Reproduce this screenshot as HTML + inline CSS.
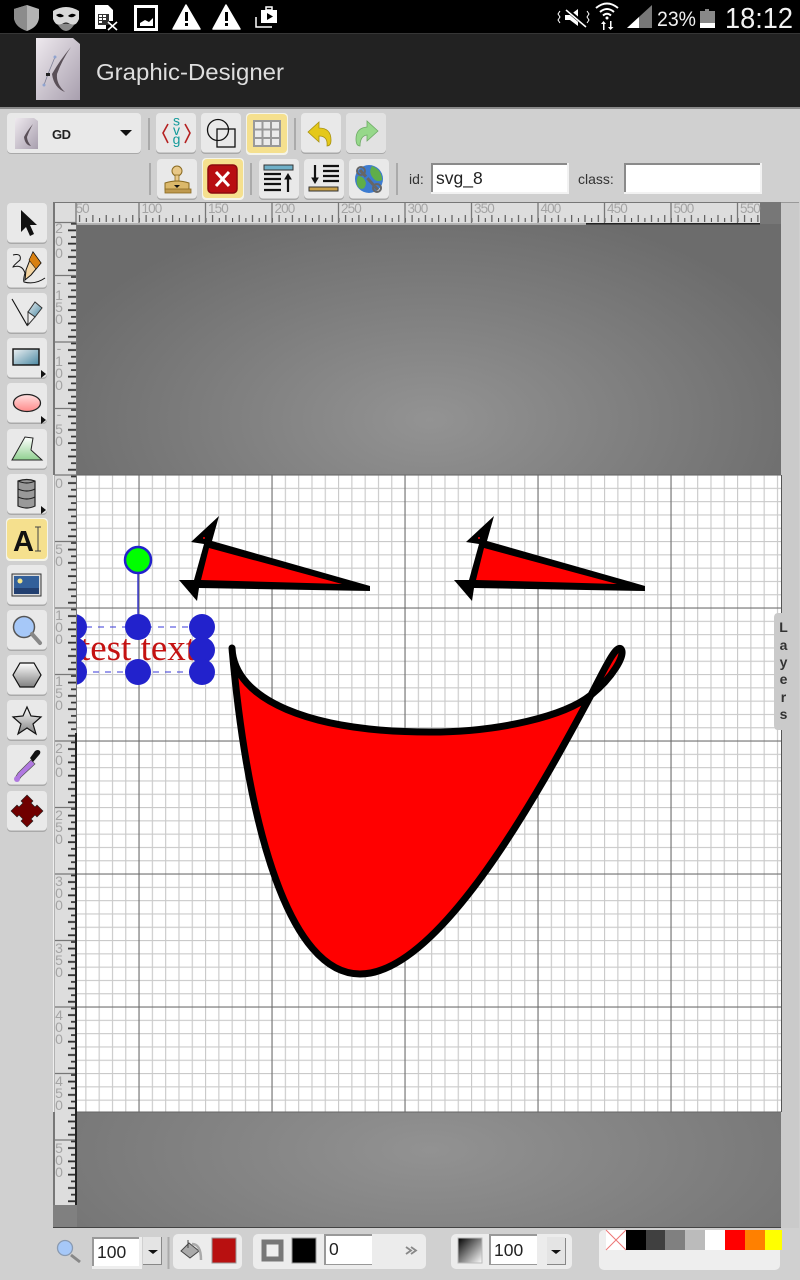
<!DOCTYPE html>
<html><head><meta charset="utf-8"><style>
html,body{margin:0;padding:0;background:#d0d0d0;width:800px;height:1280px;overflow:hidden}
svg{display:block}
text{font-family:"Liberation Sans",sans-serif}
.rt text{fill:#a4a4a4;font-size:13.5px;letter-spacing:-.9px}
.rl text{fill:#a4a4a4;font-size:14px}
</style></head><body>
<svg width="800" height="1280" viewBox="0 0 800 1280" xmlns="http://www.w3.org/2000/svg">
<defs>
<radialGradient id="gt" gradientUnits="userSpaceOnUse" cx="430" cy="420" r="400" gradientTransform="translate(430 420) scale(1 .55) translate(-430 -420)"><stop offset="0" stop-color="#939393"/><stop offset="1" stop-color="#6c6c6c"/></radialGradient>
<radialGradient id="gb" gradientUnits="userSpaceOnUse" cx="430" cy="1150" r="400" gradientTransform="translate(430 1150) scale(1 .4) translate(-430 -1150)"><stop offset="0" stop-color="#929292"/><stop offset="1" stop-color="#767676"/></radialGradient>
<linearGradient id="lg1" x1="0" y1="0" x2="1" y2="1"><stop offset="0" stop-color="#eef2f4"/><stop offset="1" stop-color="#4a88a2"/></linearGradient>
<linearGradient id="lg2" x1="0" y1="0" x2="0" y2="1"><stop offset="0" stop-color="#ffe0e0"/><stop offset="1" stop-color="#ff8a8a"/></linearGradient>
<linearGradient id="lg3" x1="0" y1="0" x2="0" y2="1"><stop offset="0" stop-color="#fff"/><stop offset="1" stop-color="#90d090"/></linearGradient>
<linearGradient id="lg4" x1="0" y1="0" x2="0" y2="1"><stop offset="0" stop-color="#fff"/><stop offset="1" stop-color="#808080"/></linearGradient>
<linearGradient id="lg5" x1="0" y1="0" x2="1" y2="1"><stop offset="0" stop-color="#000"/><stop offset="1" stop-color="#fff"/></linearGradient>
<linearGradient id="lg6" x1="0" y1="0" x2="1" y2="1"><stop offset="0" stop-color="#eee9ee"/><stop offset="1" stop-color="#a89fae"/></linearGradient>
<pattern id="minor" patternUnits="userSpaceOnUse" x="138.5" y="474.5" width="13.3" height="13.3"><path d="M.5 0V13.3M0 .5H13.3" stroke="#cacaca" stroke-width="1.3" fill="none"/></pattern>
<pattern id="tickT" patternUnits="userSpaceOnUse" x="72.5" y="212" width="13.3" height="10"><path d="M.5 6V10M7.1 3V10" stroke="#444" stroke-width="1" fill="none"/></pattern>
<pattern id="tickL" patternUnits="userSpaceOnUse" x="66" y="475" width="10" height="13.3"><path d="M5 1.5H10M2 8.1H10" stroke="#333" stroke-width="1.8" fill="none"/></pattern>
<clipPath id="cv"><rect x="77" y="224" width="704" height="1003"/></clipPath>
<g id="btn"><rect x="0" y="1" width="40" height="40" rx="4" fill="#a9a9a9"/><rect x="0" y="0" width="40" height="39.5" rx="4" fill="#e9e9e9"/></g>
<g id="tri"><path d="M0 0L5 4L0 8Z" fill="#111"/></g>
</defs>

<!-- status bar -->
<rect width="800" height="33" fill="#000"/>
<rect y="33" width="800" height="74" fill="#222"/>
<rect y="33" width="800" height="1" fill="#363636"/>
<rect y="107" width="800" height="2" fill="#8a8a8a"/>
<path d="M27 5L39 9V18Q38 27 27 31Q15 27 14 18V9Z" fill="#b4b4b4"/><path d="M27 5L14 9V18Q15 27 27 31Z" fill="#8c8c8c"/>
<path d="M53 11Q66 3 79 11V19Q76 27 70 24Q66 21 62 24Q56 27 53 19Z" fill="#d8d8d8"/><path d="M56 15Q60 12 64 16Q60 19 56 15ZM68 16Q72 12 76 15Q72 19 68 16Z" fill="#000"/><path d="M58 25Q66 22 74 25Q70 31 66 31Q62 31 58 25Z" fill="#888"/>
<path d="M95 5H108L113 10V21H106V29H95Z" fill="#fff"/><path d="M98 14H109V25H98Z" fill="#333"/><path d="M99 15h3v2h-3zM103 15h3v2h-3zM99 18h3v2h-3zM103 18h3v2h-3zM99 21h3v2h-3z" fill="#fff"/><path d="M108 22L117 30M117 22L108 30" stroke="#fff" stroke-width="1.6"/>
<rect x="135.500" y="6.500" width="21" height="23" fill="none" stroke="#fff" stroke-width="3"/><path d="M140 26V23L145 20L149 22L153 18V26Z" fill="#fff"/>
<path d="M186 5L200 29H173Z" fill="#fff" stroke="#fff" stroke-width="1.500" stroke-linejoin="round"/><rect x="185" y="12" width="3" height="9" fill="#000"/><rect x="185" y="23" width="3" height="3" fill="#000"/>
<path d="M226 5L240 29H213Z" fill="#fff" stroke="#fff" stroke-width="1.500" stroke-linejoin="round"/><rect x="225" y="12" width="3" height="9" fill="#000"/><rect x="225" y="23" width="3" height="3" fill="#000"/>
<path d="M261 10H277V23H261Z" fill="#fff"/><path d="M266 7H272V10H266Z" fill="none" stroke="#fff" stroke-width="1.500"/><path d="M267 13L273 16.500L267 20Z" fill="#000"/><path d="M256 17V27H272" fill="none" stroke="#fff" stroke-width="1.500"/>
<path d="M565 15H570L578 9V26L570 20H565Z" fill="#fff"/><path d="M566 9L586 26" stroke="#000" stroke-width="4"/><path d="M566 10L586 27" stroke="#fff" stroke-width="1.500"/><path d="M560 11l-2 3 2 3-2 3 2 3M587 11l2 3-2 3 2 3-2 3" fill="none" stroke="#fff" stroke-width="1"/>
<path d="M596 8Q607 -1 618 8M600 12Q607 6 614 12M603 15.500Q607 12 611 15.500" fill="none" stroke="#fff" stroke-width="2"/><circle cx="607" cy="18" r="1.500" fill="#fff"/><path d="M603 30V24H601L603.500 21L606 24H604.500V30ZM610 21H611.500V27H613.500L610.500 30L608 27H610Z" fill="#fff"/>
<path d="M627 28L652 5V28Z" fill="#777"/><path d="M627 28L639 17V28Z" fill="#fff"/>
<text x="657" y="26" font-size="21" fill="#f0f0f0" textLength="39" lengthAdjust="spacingAndGlyphs">23%</text>
<path d="M705 9H709V11H715V27H700V11H705Z" fill="#888"/><rect x="700" y="23" width="15" height="5" fill="#fff"/>
<text x="725" y="28" font-size="29" fill="#f2f2f2" textLength="68" lengthAdjust="spacingAndGlyphs">18:12</text>

<!-- action bar -->
<path d="M36 38H73L80 44V100H36Z" fill="url(#lg6)"/><path d="M71 47Q60 60 52 74Q54 88 65 92Q56 84 57 74Q62 60 71 47Z" fill="#5a5058"/><path d="M55 57L48 74L44 85" fill="none" stroke="#7d7f95" stroke-width=".8"/><circle cx="55" cy="57" r="1.500" fill="#90a4d0"/><circle cx="44" cy="85" r="1.500" fill="#90a4d0"/><rect x="46" y="73" width="4" height="3" fill="#222"/>
<text x="96" y="80" font-size="23" fill="#dedede" textLength="188" lengthAdjust="spacingAndGlyphs">Graphic-Designer</text>

<!-- top toolbar -->
<rect x="7" y="114" width="134" height="40" rx="4" fill="#a9a9a9"/><rect x="7" y="113" width="134" height="40" rx="4" fill="#e9e9e9"/>
<path d="M15 118H34L38 121V149H15Z" fill="url(#lg6)"/><path d="M33 124Q27 131 24 137Q25 145 31 146Q27 141 27 137Q29 131 33 124Z" fill="#5a5058"/>
<text x="52" y="139" font-size="13" font-weight="bold" fill="#222" textLength="19">GD</text>
<path d="M120 130H132L126 136Z" fill="#111"/>
<rect x="148" y="118" width="2" height="32" fill="#aaa"/>
<use href="#btn" x="156" y="113"/>
<path d="M168 124L163 133L168 143M185 124L190 133L185 143" fill="none" stroke="#b52222" stroke-width="1.600"/>
<g font-size="14" fill="#129a9a" text-anchor="middle"><text x="176.500" y="125.500">s</text><text x="176.500" y="135">v</text><text x="176.500" y="144">g</text></g>
<use href="#btn" x="201" y="113"/>
<circle cx="218" cy="130" r="10.500" fill="none" stroke="#111" stroke-width="1.300"/><rect x="217" y="129" width="18" height="18" fill="none" stroke="#111" stroke-width="1.300"/>
<rect x="246" y="113" width="42" height="42" rx="4" fill="#f4f4ea"/><rect x="247" y="114" width="40" height="39" rx="4" fill="#f5e08e"/>
<rect x="253" y="120" width="28" height="27" fill="#999"/>
<path d="M255 122h6.500v6.500h-6.500zM263.500 122h6.500v6.500h-6.500zM272 122h7v6.500h-7zM255 130.500h6.500v6.500h-6.500zM263.500 130.500h6.500v6.500h-6.500zM272 130.500h7v6.500h-7zM255 139h6.500v6h-6.500zM263.500 139h6.500v6h-6.500zM272 139h7v6h-7z" fill="#eaeaea"/>
<rect x="294" y="118" width="2" height="32" fill="#aaa"/>
<use href="#btn" x="301" y="113"/>
<path d="M308 132L319 122V128Q331 128 331 140Q331 146 327 146Q328 136 319 136V142Z" fill="#e4c81a" stroke="#a89210" stroke-width=".8"/>
<use href="#btn" x="346" y="113"/>
<rect x="346" y="113" width="40" height="40" rx="4" fill="#e2e2e2"/>
<path d="M378 131L367 121V127Q356 128 356 139Q356 146 360 146Q360 136 367 135V141Z" fill="#96d88a" stroke="#6eaa66" stroke-width=".8"/>

<rect x="149" y="163" width="2" height="32" fill="#aaa"/>
<use href="#btn" x="157" y="159"/>
<circle cx="177" cy="171" r="5" fill="#e8c888" stroke="#8a6a20"/><rect x="175" y="175" width="4" height="7" fill="#e8c888" stroke="#8a6a20" stroke-width=".8"/><path d="M165 183Q177 179 189 183V190H165Z" fill="#dbb86a" stroke="#8a6a20"/><rect x="165" y="189" width="26" height="4" fill="#bf9a50" stroke="#8a6a20" stroke-width=".8"/><path d="M174 185H180L177 188Z" fill="#111"/>
<rect x="202" y="158" width="42" height="42" rx="4" fill="#f4f4ea"/><rect x="203" y="159" width="40" height="39" rx="4" fill="#f5e08e"/>
<rect x="208" y="165" width="29" height="28" rx="4" fill="#b80d12" stroke="#8c0a0e" stroke-width="1.500"/><path d="M216 172L229 186M229 172L216 186" stroke="#fff" stroke-width="3"/>
<rect x="250" y="163" width="2" height="32" fill="#aaa"/>
<use href="#btn" x="259" y="159"/>
<rect x="264" y="165" width="29" height="5" fill="#6fb0c8" stroke="#333"/>
<path d="M264 174H281M264 179H281M264 184H281M264 190H281" stroke="#111" stroke-width="2.200"/><path d="M288 192V178" stroke="#111" stroke-width="2.200"/><path d="M285 179L288 174L291 179Z" fill="#111" stroke="#111"/>
<use href="#btn" x="304" y="159"/>
<path d="M323 166H339M323 171H339M323 176H339M323 181H339" stroke="#111" stroke-width="2.200"/><path d="M315 165V179" stroke="#111" stroke-width="2.200"/><path d="M312 178L315 183L318 178Z" fill="#111" stroke="#111"/><rect x="309" y="187" width="29" height="4" fill="#c9a14a" stroke="#333"/>
<use href="#btn" x="349" y="159"/>
<circle cx="369" cy="179" r="14" fill="#3c7bd0"/><path d="M372 166Q382 170 382 180Q377 183 373 178Q368 172 372 166ZM358 176Q364 176 366 183Q365 191 359 188Q355 183 358 176Z" fill="#5fae4a"/>
<path d="M360 170L378 190" stroke="#666" stroke-width="3" stroke-dasharray="9 2" fill="none"/><circle cx="361" cy="171" r="4" fill="none" stroke="#666" stroke-width="2"/><circle cx="377" cy="188" r="4" fill="none" stroke="#666" stroke-width="2"/>
<rect x="396" y="163" width="2" height="32" fill="#aaa"/>
<text x="409" y="184" font-size="14" fill="#333">id:</text>
<rect x="431" y="163" width="138" height="31" fill="#f2f2f2"/><rect x="431" y="163" width="136" height="29" fill="#8a8a8a"/><rect x="433" y="165" width="134" height="27" fill="#fff"/>
<text x="436" y="184" font-size="17.500" fill="#222">svg_8</text>
<text x="578" y="184" font-size="14" fill="#333">class:</text>
<rect x="624" y="163" width="138" height="31" fill="#f2f2f2"/><rect x="624" y="163" width="136" height="29" fill="#8a8a8a"/><rect x="626" y="165" width="134" height="27" fill="#fff"/>

<!-- canvas frame -->
<rect x="53" y="202" width="729" height="1025" fill="#777"/>
<rect x="77" y="224" width="704" height="251" fill="url(#gt)"/>
<rect x="77" y="1112" width="704" height="115" fill="url(#gb)"/>
<rect x="53" y="1205" width="24" height="22" fill="#808080"/>
<rect x="53" y="1227" width="729" height="1" fill="#444"/>
<rect x="77" y="475" width="704" height="637" fill="#fff"/>
<rect x="77" y="475" width="704" height="637" fill="url(#minor)"/>
<path d="M139 475V1112M272 475V1112M405 475V1112M538 475V1112M671 475V1112M77 475H781M77 608H781M77 741H781M77 874H781M77 1007H781M77 1112H781" stroke="#666" stroke-width="1" fill="none"/>
<!-- top ruler -->
<rect x="55" y="203" width="21" height="19" fill="#ddd"/>
<rect x="76" y="203" width="684" height="20" fill="#ddd"/>
<rect x="76" y="212" width="684" height="10" fill="url(#tickT)"/>
<path d="M76 203V223M139 203V223M205.500 203V223M272 203V223M338.500 203V223M405 203V223M471.500 203V223M538 203V223M604.500 203V223M671 203V223M737.500 203V223" stroke="#777" stroke-width="1.300"/>
<g class="rt"><text x="75.500" y="213">50</text><text x="141.500" y="213">100</text><text x="208" y="213">150</text><text x="274.500" y="213">200</text><text x="341" y="213">250</text><text x="407.500" y="213">300</text><text x="474" y="213">350</text><text x="540.500" y="213">400</text><text x="607" y="213">450</text><text x="673.500" y="213">500</text><text x="740" y="213">550</text></g>
<rect x="77" y="223.500" width="509" height="1" fill="#eee"/>
<rect x="586" y="223" width="174" height="1.500" fill="#222"/>
<!-- left ruler -->
<rect x="55" y="222" width="21" height="983" fill="#ddd"/>
<rect x="66" y="222" width="10" height="983" fill="url(#tickL)"/>
<path d="M55 222.500H76M55 275.500H76M55 342H76M55 408.500H76M55 475H76M55 541.500H76M55 608H76M55 674.500H76M55 741H76M55 807.500H76M55 874H76M55 940.500H76M55 1007H76M55 1073.500H76M55 1140H76" stroke="#777" stroke-width="1.300"/>
<rect x="75" y="733" width="2" height="472" fill="#222"/>
<rect x="53" y="475" width="1.500" height="637" fill="#eee"/>
<g class="rl" text-anchor="middle">
<text x="59" y="233">2</text><text x="59" y="246">0</text><text x="59" y="258">0</text>
<text x="59" y="287">-</text><text x="59" y="300">1</text><text x="59" y="312">5</text><text x="59" y="324">0</text>
<text x="59" y="353">-</text><text x="59" y="366">1</text><text x="59" y="378">0</text><text x="59" y="390">0</text>
<text x="59" y="419">-</text><text x="59" y="434">5</text><text x="59" y="446">0</text>
<text x="59" y="488">0</text>
<text x="59" y="554">5</text><text x="59" y="566">0</text>
<text x="59" y="620">1</text><text x="59" y="632">0</text><text x="59" y="644">0</text>
<text x="59" y="686">1</text><text x="59" y="698">5</text><text x="59" y="710">0</text>
<text x="59" y="753">2</text><text x="59" y="765">0</text><text x="59" y="777">0</text>
<text x="59" y="820">2</text><text x="59" y="832">5</text><text x="59" y="844">0</text>
<text x="59" y="886">3</text><text x="59" y="898">0</text><text x="59" y="910">0</text>
<text x="59" y="953">3</text><text x="59" y="965">5</text><text x="59" y="977">0</text>
<text x="59" y="1020">4</text><text x="59" y="1032">0</text><text x="59" y="1044">0</text>
<text x="59" y="1086">4</text><text x="59" y="1098">5</text><text x="59" y="1110">0</text>
<text x="59" y="1153">5</text><text x="59" y="1165">0</text><text x="59" y="1177">0</text>
</g>
<!-- scrollbar -->
<rect x="761" y="203" width="20" height="20" fill="#777"/>
<rect x="781" y="202" width="18" height="1026" fill="#cacaca"/>
<rect x="781" y="475" width="1" height="637" fill="#555"/>
<rect x="781" y="202" width="18" height="1" fill="#999"/>

<!-- drawing -->
<g clip-path="url(#cv)">
<path d="M219 516L191 542L204 544L194 580L179 580L197 601L199 588L370 591L370 586L212 541Z" fill="#000"/><path d="M209 548L342 584L201 580Z" fill="#f00"/><circle cx="204" cy="538" r="1" fill="#f00"/>
<g transform="translate(275 0)"><path d="M219 516L191 542L204 544L194 580L179 580L197 601L199 588L370 591L370 586L212 541Z" fill="#000"/><path d="M209 548L342 584L201 580Z" fill="#f00"/><circle cx="204" cy="538" r="1" fill="#f00"/></g>
<path d="M232 648C234 700 310 732 430 732C500 732 565 716 591 695C612 678 626 655 621 649C616 644 604 670 591 695C540 790 440 974 360 974C290 974 248 830 232 648Z" fill="#f00" stroke="#000" stroke-width="7" stroke-linejoin="round"/>
<text x="138" y="660" font-size="37" fill="#c41212" style="font-family:'Liberation Serif',serif" text-anchor="middle">test text</text>
<rect x="74" y="627" width="128" height="45" fill="none" stroke="#3a3ad8" stroke-width="1" stroke-dasharray="6 6"/>
<path d="M138 573V614" stroke="#3a3ad0" stroke-width="1.500"/>
<circle cx="138" cy="560" r="13" fill="#0f0" stroke="#2222cc" stroke-width="2.500"/>
<g fill="#2222cc"><circle cx="74" cy="627" r="13"/><circle cx="74" cy="650" r="13"/><circle cx="74" cy="672" r="13"/><circle cx="138" cy="627" r="13"/><circle cx="138" cy="672" r="13"/><circle cx="202" cy="627" r="13"/><circle cx="202" cy="650" r="13"/><circle cx="202" cy="672" r="13"/></g>
</g>
<!-- layers tab -->
<path d="M782 613H778Q774 613 774 618V725Q774 730 778 730H782Z" fill="#cacaca"/>
<g font-size="14" font-weight="bold" fill="#333" text-anchor="middle"><text x="783.500" y="632">L</text><text x="783.500" y="650">a</text><text x="783.500" y="667">y</text><text x="783.500" y="684">e</text><text x="783.500" y="702">r</text><text x="783.500" y="719">s</text></g>

<!-- left tools -->
<use href="#btn" x="7" y="203"/><path d="M21 210L21 232L26 227L30 236L34 234L30 225L37 225Z" fill="#111"/>
<use href="#btn" x="7" y="248"/><path d="M13 255Q22 253 20 260Q13 266 13 267Q22 264 25 273Q23 280 24 282Q35 285 45 278" fill="none" stroke="#111" stroke-width="1"/><path d="M33 252L41 263L31 275L25 280L26 270Z" fill="#f4d4a0" stroke="#111"/><path d="M33 252L41 263L36 269L29 260Z" fill="#d88010" stroke="#111" stroke-width=".6"/>
<use href="#btn" x="7" y="293"/><path d="M12 299L27 325L34 310" fill="none" stroke="#111" stroke-width="1.100"/><path d="M35 302L42 308L35 317L28 312Z" fill="url(#lg1)" stroke="#333"/><path d="M28 312L35 317L28 325Z" fill="#eee" stroke="#333"/>
<use href="#btn" x="7" y="338"/><rect x="13" y="349" width="26" height="16" fill="url(#lg1)" stroke="#111" stroke-width="1.400"/><use href="#tri" x="41" y="370"/>
<use href="#btn" x="7" y="383"/><ellipse cx="27" cy="403" rx="13.500" ry="8.500" fill="url(#lg2)" stroke="#222" stroke-width="1.300"/><use href="#tri" x="41" y="416"/>
<use href="#btn" x="7" y="429"/><path d="M12 460L25 437L33 438L31 450L42 460Z" fill="url(#lg3)" stroke="#222" stroke-width="1"/>
<use href="#btn" x="7" y="474"/><path d="M18 481Q27 478 35 481V506Q27 510 18 506Z" fill="#999" stroke="#222" stroke-width="1.200"/><path d="M18 481Q27 485 35 481M18 489Q27 493 35 489M18 497Q27 501 35 497" fill="none" stroke="#222" stroke-width="1.200"/><use href="#tri" x="41" y="506"/>
<rect x="6" y="518" width="42" height="43" rx="4" fill="#f4f4ea"/><rect x="7" y="519" width="40" height="40" rx="4" fill="#f5e08e"/>
<text x="13" y="551" font-size="29" font-weight="bold" fill="#111">A</text><path d="M35 527H41M38 527V551M35 551H41" stroke="#444" stroke-width="1" fill="none"/>
<use href="#btn" x="7" y="565"/><rect x="12" y="574" width="29" height="22" fill="#ddd" stroke="#333"/><rect x="14" y="576" width="25" height="18" fill="#33609a"/><rect x="14" y="588" width="25" height="6" fill="#223f70"/><circle cx="20" cy="581" r="2.500" fill="#f4e58a"/>
<use href="#btn" x="7" y="610"/><circle cx="24" cy="627" r="10.500" fill="#a6c8f8" stroke="#555" stroke-width="1.500"/><path d="M32 634L40 643" stroke="#888" stroke-width="4" stroke-linecap="round"/>
<use href="#btn" x="7" y="655"/><path d="M13 675L20 663H34L41 675L34 687H20Z" fill="url(#lg4)" stroke="#111" stroke-width="1.200"/>
<use href="#btn" x="7" y="700"/><path d="M27 707L31 716L41 717L33 724L36 734L27 728L18 734L21 724L13 717L23 716Z" fill="url(#lg4)" stroke="#111" stroke-width="1.200"/>
<use href="#btn" x="7" y="745"/><path d="M31 760L35 764L21 777L18 781L15 778L18 773Z" fill="#b078e0" stroke="#555" stroke-width=".7"/><path d="M30 758L35 751Q38 749 40 751Q41 753 39 755L33 762Z" fill="#111"/><circle cx="17" cy="779" r="3" fill="#b078e0"/>
<use href="#btn" x="7" y="791"/><path d="M27 795L33 801L31 803L35 807L37 805L43 811L37 817L35 815L31 819L33 821L27 827L21 821L23 819L19 815L17 817L11 811L17 805L19 807L23 803L21 801Z" fill="#700000" stroke="#222" stroke-width=".6"/>

<!-- bottom bar -->
<circle cx="65" cy="1248" r="7.500" fill="#a6c8f8" stroke="#8a9ab0" stroke-width="1.300"/><path d="M71 1255L80 1262" stroke="#888" stroke-width="3"/>
<rect x="92" y="1237" width="50" height="32" fill="#eee"/><rect x="92" y="1237" width="47" height="29" fill="#999"/><rect x="94" y="1239" width="45" height="27" fill="#fff"/>
<text x="97" y="1258" font-size="17.500" fill="#222">100</text>
<rect x="143" y="1237" width="19" height="28" fill="#888"/><rect x="143" y="1237" width="18" height="27" fill="#e4e4e4"/><path d="M148 1250H158L153 1254Z" fill="#111"/>
<rect x="167.500" y="1237" width="2" height="32" fill="#aaa"/>
<rect x="173" y="1234" width="69" height="35" rx="5" fill="#ececec"/>
<path d="M181 1251L189 1243L199 1251L190 1258Z" fill="#aaa" stroke="#444"/><path d="M188 1240V1248" stroke="#444"/><path d="M192 1244Q201 1244 201 1260" fill="none" stroke="#aaa" stroke-width="2.500"/>
<rect x="212" y="1238" width="24" height="25" fill="#b81010" stroke="#999"/>
<rect x="253" y="1234" width="173" height="35" rx="5" fill="#ececec"/>
<rect x="264" y="1242" width="17" height="17" fill="#eee" stroke="#777" stroke-width="5"/>
<rect x="292" y="1238" width="24" height="25" fill="#000" stroke="#999"/>
<rect x="324" y="1234" width="48" height="31" fill="#999"/><rect x="326" y="1236" width="46" height="28" fill="#fff"/>
<text x="329" y="1255" font-size="17.500" fill="#222">0</text>
<path d="M406 1247L411 1250.500L406 1254M411 1247L416 1250.500L411 1254" fill="none" stroke="#888" stroke-width="1.800"/>
<rect x="451" y="1234" width="121" height="35" rx="5" fill="#ececec"/>
<rect x="458" y="1238" width="24" height="25" fill="url(#lg5)" stroke="#bbb"/>
<rect x="489" y="1234" width="48" height="31" fill="#999"/><rect x="491" y="1236" width="46" height="28" fill="#fff"/>
<text x="494" y="1256" font-size="17.500" fill="#222">100</text>
<rect x="547" y="1238" width="19" height="27" fill="#888"/><rect x="547" y="1237" width="18" height="27" fill="#e4e4e4"/><path d="M551 1250H561L556 1254Z" fill="#111"/>
<rect x="599" y="1230" width="181" height="40" rx="5" fill="#eeeeee"/>
<rect x="606" y="1230" width="20" height="20" fill="#fff"/><path d="M606 1230L626 1250M626 1230L606 1250" stroke="#e77" stroke-width="1"/>
<rect x="626" y="1230" width="20" height="20" fill="#000"/><rect x="646" y="1230" width="19" height="20" fill="#404040"/><rect x="665" y="1230" width="20" height="20" fill="#808080"/><rect x="685" y="1230" width="20" height="20" fill="#bbb"/><rect x="705" y="1230" width="20" height="20" fill="#fff"/><rect x="725" y="1230" width="20" height="20" fill="#f00"/><rect x="745" y="1230" width="20" height="20" fill="#ff8000"/><rect x="765" y="1230" width="17" height="20" fill="#ff0"/>
</svg>
</body></html>
